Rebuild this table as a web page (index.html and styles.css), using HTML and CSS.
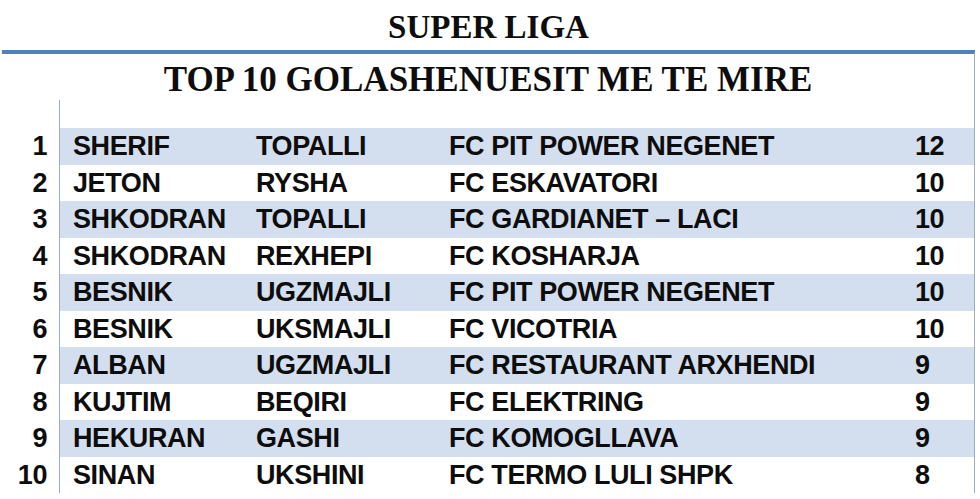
FILE: index.html
```html
<!DOCTYPE html>
<html>
<head>
<meta charset="utf-8">
<link rel="stylesheet" href="styles.css">
</head>
<body>
<div class="page">
  <h1 class="title">SUPER LIGA</h1>
  <div class="box">
    <h2 class="subtitle">TOP 10 GOLASHENUESIT ME TE MIRE</h2>
    <div class="table">
      <div class="row blank"><div class="num"></div><div class="cells"></div></div>
      <div class="row band"><div class="num">1</div><div class="cells"><span>SHERIF</span><span>TOPALLI</span><span>FC PIT POWER NEGENET</span><span>12</span></div></div>
      <div class="row"><div class="num">2</div><div class="cells"><span>JETON</span><span>RYSHA</span><span>FC ESKAVATORI</span><span>10</span></div></div>
      <div class="row band"><div class="num">3</div><div class="cells"><span>SHKODRAN</span><span>TOPALLI</span><span>FC GARDIANET – LACI</span><span>10</span></div></div>
      <div class="row"><div class="num">4</div><div class="cells"><span>SHKODRAN</span><span>REXHEPI</span><span>FC KOSHARJA</span><span>10</span></div></div>
      <div class="row band"><div class="num">5</div><div class="cells"><span>BESNIK</span><span>UGZMAJLI</span><span>FC PIT POWER NEGENET</span><span>10</span></div></div>
      <div class="row"><div class="num">6</div><div class="cells"><span>BESNIK</span><span>UKSMAJLI</span><span>FC VICOTRIA</span><span>10</span></div></div>
      <div class="row band"><div class="num">7</div><div class="cells"><span>ALBAN</span><span>UGZMAJLI</span><span>FC RESTAURANT ARXHENDI</span><span>9</span></div></div>
      <div class="row"><div class="num">8</div><div class="cells"><span>KUJTIM</span><span>BEQIRI</span><span>FC ELEKTRING</span><span>9</span></div></div>
      <div class="row band"><div class="num">9</div><div class="cells"><span>HEKURAN</span><span>GASHI</span><span>FC KOMOGLLAVA</span><span>9</span></div></div>
      <div class="row last"><div class="num">10</div><div class="cells"><span>SINAN</span><span>UKSHINI</span><span>FC TERMO LULI SHPK</span><span>8</span></div></div>
    </div>
  </div>
</div>
</body>
</html>
```
FILE: styles.css
```css
html, body {
  margin: 0;
  padding: 0;
  background: #ffffff;
}
.page {
  margin-left: 2px;
  width: 973px;
  color: #0d0d0d;
}
.title {
  margin: 0;
  height: 50px;
  box-sizing: border-box;
  padding-top: 5px;
  line-height: 45px;
  font-family: "Liberation Serif", serif;
  font-weight: bold;
  font-size: 33px;
  text-align: center;
}
.box {
  border-top: 4px solid #4f81bd;
  border-right: 1px solid #9aabc4;
}
.subtitle {
  margin: 0;
  height: 46px;
  box-sizing: border-box;
  padding-top: 6px;
  line-height: 40px;
  font-family: "Liberation Serif", serif;
  font-weight: bold;
  font-size: 35px;
  text-align: center;
}
.table {
  font-family: "Liberation Sans", Arial, sans-serif;
  font-weight: bold;
  font-size: 27px;
  letter-spacing: -0.4px;
}
.row {
  display: grid;
  grid-template-columns: 57px 1fr;
  height: 36.5px;
  line-height: 36.5px;
}
.row.blank {
  height: 28px;
}
.num {
  text-align: right;
  padding-right: 12px;
}
.cells {
  border-left: 1px solid #9aabc4;
  display: grid;
  grid-template-columns: 183px 193px 466px 1fr;
  padding-left: 13px;
  white-space: nowrap;
}
.band .cells {
  background: #d3dfee;
}
.last .cells {
  border-bottom: 1px solid #9aabc4;
}
```
